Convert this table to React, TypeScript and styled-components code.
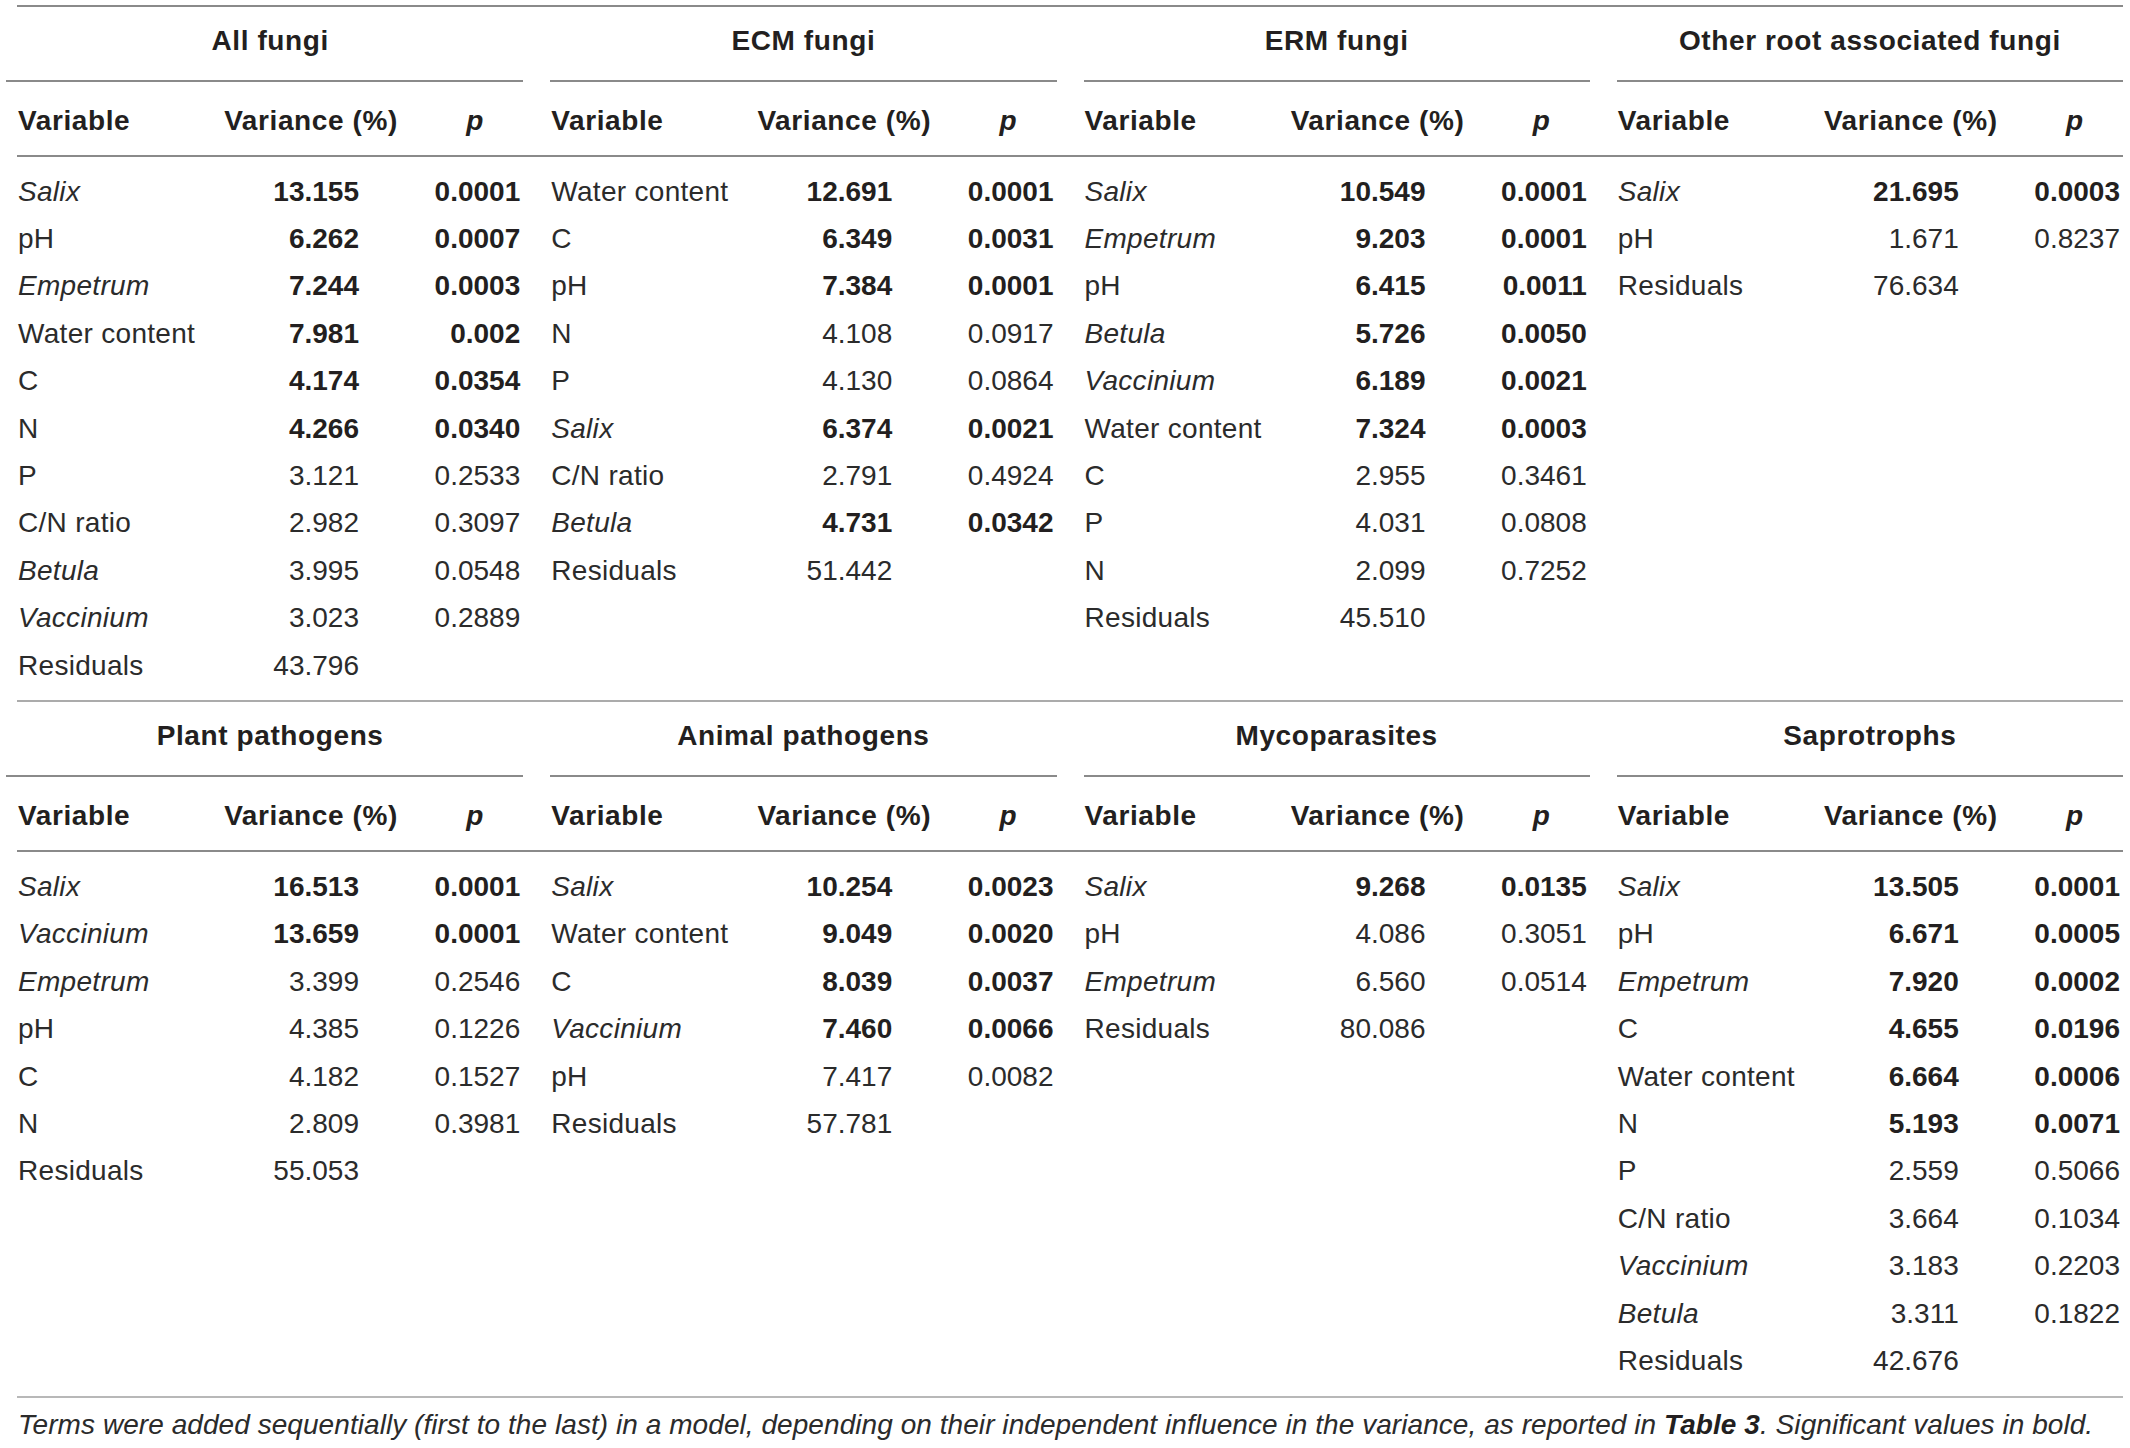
import * as React from "react"
import styled, { createGlobalStyle } from "styled-components"

const GlobalStyle = createGlobalStyle`
  html, body {
    margin: 0;
    padding: 0;
    background: #ffffff;
  }
  body {
    font-family: "Liberation Sans", Arial, Helvetica, sans-serif;
    color: #231f20;
  }
`

type Row = [string, string, string, boolean?, boolean?]
type Block = { title: string; rows: Row[] }

// name, variance, p, italic name, significant (bold)
const topBlocks: Block[] = [
  {
    title: "All fungi",
    rows: [
      ["Salix", "13.155", "0.0001", true, true],
      ["pH", "6.262", "0.0007", false, true],
      ["Empetrum", "7.244", "0.0003", true, true],
      ["Water content", "7.981", "0.002", false, true],
      ["C", "4.174", "0.0354", false, true],
      ["N", "4.266", "0.0340", false, true],
      ["P", "3.121", "0.2533"],
      ["C/N ratio", "2.982", "0.3097"],
      ["Betula", "3.995", "0.0548", true],
      ["Vaccinium", "3.023", "0.2889", true],
      ["Residuals", "43.796", ""],
    ],
  },
  {
    title: "ECM fungi",
    rows: [
      ["Water content", "12.691", "0.0001", false, true],
      ["C", "6.349", "0.0031", false, true],
      ["pH", "7.384", "0.0001", false, true],
      ["N", "4.108", "0.0917"],
      ["P", "4.130", "0.0864"],
      ["Salix", "6.374", "0.0021", true, true],
      ["C/N ratio", "2.791", "0.4924"],
      ["Betula", "4.731", "0.0342", true, true],
      ["Residuals", "51.442", ""],
    ],
  },
  {
    title: "ERM fungi",
    rows: [
      ["Salix", "10.549", "0.0001", true, true],
      ["Empetrum", "9.203", "0.0001", true, true],
      ["pH", "6.415", "0.0011", false, true],
      ["Betula", "5.726", "0.0050", true, true],
      ["Vaccinium", "6.189", "0.0021", true, true],
      ["Water content", "7.324", "0.0003", false, true],
      ["C", "2.955", "0.3461"],
      ["P", "4.031", "0.0808"],
      ["N", "2.099", "0.7252"],
      ["Residuals", "45.510", ""],
    ],
  },
  {
    title: "Other root associated fungi",
    rows: [
      ["Salix", "21.695", "0.0003", true, true],
      ["pH", "1.671", "0.8237"],
      ["Residuals", "76.634", ""],
    ],
  },
]

const bottomBlocks: Block[] = [
  {
    title: "Plant pathogens",
    rows: [
      ["Salix", "16.513", "0.0001", true, true],
      ["Vaccinium", "13.659", "0.0001", true, true],
      ["Empetrum", "3.399", "0.2546", true],
      ["pH", "4.385", "0.1226"],
      ["C", "4.182", "0.1527"],
      ["N", "2.809", "0.3981"],
      ["Residuals", "55.053", ""],
    ],
  },
  {
    title: "Animal pathogens",
    rows: [
      ["Salix", "10.254", "0.0023", true, true],
      ["Water content", "9.049", "0.0020", false, true],
      ["C", "8.039", "0.0037", false, true],
      ["Vaccinium", "7.460", "0.0066", true, true],
      ["pH", "7.417", "0.0082"],
      ["Residuals", "57.781", ""],
    ],
  },
  {
    title: "Mycoparasites",
    rows: [
      ["Salix", "9.268", "0.0135", true, true],
      ["pH", "4.086", "0.3051"],
      ["Empetrum", "6.560", "0.0514", true],
      ["Residuals", "80.086", ""],
    ],
  },
  {
    title: "Saprotrophs",
    rows: [
      ["Salix", "13.505", "0.0001", true, true],
      ["pH", "6.671", "0.0005", false, true],
      ["Empetrum", "7.920", "0.0002", true, true],
      ["C", "4.655", "0.0196", false, true],
      ["Water content", "6.664", "0.0006", false, true],
      ["N", "5.193", "0.0071", false, true],
      ["P", "2.559", "0.5066"],
      ["C/N ratio", "3.664", "0.1034"],
      ["Vaccinium", "3.183", "0.2203", true],
      ["Betula", "3.311", "0.1822", true],
      ["Residuals", "42.676", ""],
    ],
  },
]

const Page = styled.div`
  width: 2130px;
  box-sizing: border-box;
  padding: 5px 7px 0 17px;
  font-size: 28px;
`

const Section = styled.div<{ $light?: boolean }>`
  border-top: 2px solid ${(p) => (p.$light ? "#ababab" : "#8a8a8a")};
`

const FourCols = styled.div`
  display: grid;
  grid-template-columns: repeat(4, 1fr);
  column-gap: 27px;
`

const TitleCell = styled.div<{ $first?: boolean }>`
  height: 75px;
  box-sizing: border-box;
  padding-bottom: 6px;
  display: flex;
  align-items: center;
  justify-content: center;
  font-weight: bold;
  letter-spacing: 0.6px;
  white-space: nowrap;
  border-bottom: 2px solid #8a8a8a;
  margin-left: ${(p) => (p.$first ? "-11px" : "0")};
  padding-left: ${(p) => (p.$first ? "11px" : "0")};
`

const HeaderRow = styled(FourCols)`
  border-bottom: 2px solid #8a8a8a;
`

const ColGrid = styled.div`
  display: grid;
  grid-template-columns: 196px 196px 1fr;
  align-items: center;
`

const HeadCell = styled.div<{ $align: "left" | "center"; $shift?: number }>`
  height: 73px;
  box-sizing: border-box;
  padding-top: 5px;
  display: flex;
  align-items: center;
  justify-content: ${(p) => (p.$align === "left" ? "flex-start" : "center")};
  padding-left: ${(p) => (p.$shift ?? 1)}px;
  font-weight: bold;
  letter-spacing: 0.6px;
  white-space: nowrap;
`

const PHead = styled.span`
  font-style: italic;
`

const Body = styled(FourCols)`
  padding: 11px 0;
  align-items: start;
`

const DataRow = styled(ColGrid)`
  height: 47.4px;
  color: #2b2b2b;
`

const NameCell = styled.div<{ $italic?: boolean }>`
  padding-left: 1px;
  font-style: ${(p) => (p.$italic ? "italic" : "normal")};
  letter-spacing: 0.3px;
  white-space: nowrap;
`

const NumCell = styled.div<{ $bold?: boolean; $pad: number }>`
  text-align: right;
  padding-right: ${(p) => p.$pad}px;
  font-weight: ${(p) => (p.$bold ? "bold" : "normal")};
  color: ${(p) => (p.$bold ? "#231f20" : "#2b2b2b")};
`

const Footer = styled.div`
  border-top: 2px solid #b8b8b8;
  padding: 11px 0 0 1px;
  line-height: 32px;
  font-style: italic;
  letter-spacing: 0.06px;
  color: #2b2b2b;
  white-space: nowrap;
  b {
    color: #231f20;
  }
`

const TableSection = ({ blocks, light }: { blocks: Block[]; light?: boolean }) => (
  <Section $light={light}>
    <FourCols>
      {blocks.map((b, i) => (
        <TitleCell key={b.title} $first={i === 0}>
          {b.title}
        </TitleCell>
      ))}
    </FourCols>
    <HeaderRow>
      {blocks.map((b) => (
        <ColGrid key={b.title}>
          <HeadCell $align="left">Variable</HeadCell>
          <HeadCell $align="center" $shift={0}>Variance (%)</HeadCell>
          <HeadCell $align="center" $shift={18}>
            <PHead>p</PHead>
          </HeadCell>
        </ColGrid>
      ))}
    </HeaderRow>
    <Body>
      {blocks.map((b) => (
        <div key={b.title}>
          {b.rows.map(([name, variance, p, italic, bold]) => (
            <DataRow key={name}>
              <NameCell $italic={italic}>{name}</NameCell>
              <NumCell $bold={bold} $pad={50}>{variance}</NumCell>
              <NumCell $bold={bold} $pad={3}>{p}</NumCell>
            </DataRow>
          ))}
        </div>
      ))}
    </Body>
  </Section>
)

export default function App() {
  return (
    <>
      <GlobalStyle />
      <Page>
        <TableSection blocks={topBlocks} />
        <TableSection blocks={bottomBlocks} light />
        <Footer>
          Terms were added sequentially (first to the last) in a model, depending on their independent
          influence in the variance, as reported in <b>Table 3</b>. Significant values in bold.
        </Footer>
      </Page>
    </>
  )
}
